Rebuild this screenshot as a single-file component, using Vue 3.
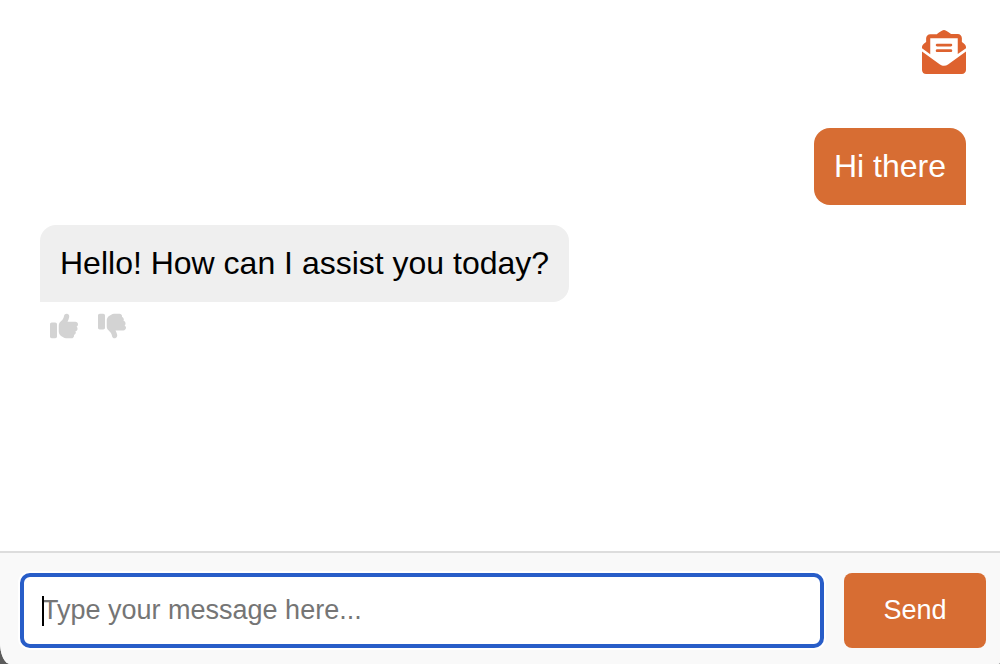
<script setup>
import { ref, computed } from 'vue'

const draft = ref('')
const caretShown = computed(() => draft.value === '')
const messages = ref([
  { id: 1, from: 'user', text: 'Hi there' },
  { id: 2, from: 'bot', text: 'Hello! How can I assist you today?' },
])

function send() {
  const text = draft.value.trim()
  if (!text) return
  messages.value.push({ id: messages.value.length + 1, from: 'user', text })
  draft.value = ''
}
</script>

<template>
  <main class="chat">
    <header class="top">
      <button class="icon-button mail" type="button" aria-label="Email transcript">
        <svg viewBox="0 0 512 512" aria-hidden="true">
          <path d="M256 417.1c-16.38 0-32.88-4.1-46.88-15.12L0 250.9v213.1C0 490.5 21.5 512 48 512h416c26.5 0 48-21.5 48-47.1V250.9l-209.1 151.1C288.9 412 272.4 417.1 256 417.1zM493.6 163C484.8 156 476.4 149.5 464 140.1v-44.12c0-26.5-21.5-48-48-48l-77.5 .0016c-3.125-2.25-5.875-4.25-9.125-6.5C312.6 29.13 279.3-.3732 256 .0018C232.8-.3732 199.4 29.13 182.6 41.5c-3.25 2.25-6 4.25-9.125 6.5L96 48c-26.5 0-48 21.5-48 48v44.12C35.63 149.5 27.25 156 18.38 163C6.75 172 0 186 0 200.8v10.62l96 69.37V96h320v184.7l96-69.37V200.8C512 186 505.3 172 493.6 163zM176 255.1h160c8.836 0 16-7.164 16-15.1c0-8.838-7.164-16-16-16h-160c-8.836 0-16 7.162-16 16C160 248.8 167.2 255.1 176 255.1zM176 191.1h160c8.836 0 16-7.164 16-16c0-8.838-7.164-15.1-16-15.1h-160c-8.836 0-16 7.162-16 15.1C160 184.8 167.2 191.1 176 191.1z" />
        </svg>
      </button>
    </header>

    <section class="messages" aria-label="Conversation">
      <div v-for="m in messages" :key="m.id" class="message" :class="m.from">
        <p class="bubble">{{ m.text }}</p>
        <div v-if="m.from === 'bot'" class="feedback">
          <button class="icon-button thumb" type="button" aria-label="Good answer">
            <svg viewBox="0 0 512 512" aria-hidden="true">
              <path d="M313.4 32.9c26 5.2 42.9 30.5 37.7 56.5l-2.3 11.4c-5.3 26.7-15.1 52.1-28.8 75.2H464c26.5 0 48 21.5 48 48c0 18.5-10.5 34.6-25.9 42.6C497 275.4 504 288.9 504 304c0 23.4-16.8 42.9-38.9 47.1c4.4 7.3 6.9 15.8 6.9 24.9c0 21.3-13.9 39.4-33.1 45.6c.7 3.3 1.1 6.8 1.1 10.4c0 26.5-21.5 48-48 48H294.5c-19 0-37.5-5.6-53.3-16.1l-38.5-25.7C176 420.4 160 390.4 160 358.3V320 272 247.1c0-29.2 13.3-56.7 36-75l7.4-5.9c26.5-21.2 44.6-51 51.2-84.2l2.3-11.4c5.2-26 30.5-42.9 56.5-37.7zM32 192H96c17.7 0 32 14.3 32 32V448c0 17.7-14.3 32-32 32H32c-17.7 0-32-14.3-32-32V224c0-17.7 14.3-32 32-32z" />
            </svg>
          </button>
          <button class="icon-button thumb" type="button" aria-label="Bad answer">
            <svg viewBox="0 0 512 512" aria-hidden="true">
              <path d="M313.4 479.1c26-5.2 42.9-30.5 37.7-56.5l-2.3-11.4c-5.3-26.7-15.1-52.1-28.8-75.2H464c26.5 0 48-21.5 48-48c0-18.5-10.5-34.6-25.9-42.6C497 236.6 504 223.1 504 208c0-23.4-16.8-42.9-38.9-47.1c4.4-7.3 6.9-15.8 6.9-24.9c0-21.3-13.9-39.4-33.1-45.6c.7-3.3 1.1-6.8 1.1-10.4c0-26.5-21.5-48-48-48H294.5c-19 0-37.5 5.6-53.3 16.1L202.7 73.8C176 91.6 160 121.6 160 153.7V192v48 24.9c0 29.2 13.3 56.7 36 75l7.4 5.9c26.5 21.2 44.6 51 51.2 84.2l2.3 11.4c5.2 26 30.5 42.9 56.5 37.7zM32 320H96c17.7 0 32-14.3 32-32V64c0-17.7-14.3-32-32-32H32C14.3 32 0 46.3 0 64V288c0 17.7 14.3 32 32 32z" />
            </svg>
          </button>
        </div>
      </div>
    </section>

    <form class="composer" @submit.prevent="send">
      <div class="field" :class="{ caret: caretShown }">
        <input v-model="draft" class="input" type="text" aria-label="Message" placeholder="Type your message here..." />
      </div>
      <button class="send" type="submit">Send</button>
    </form>
  </main>
</template>

<style>
html,
body {
  margin: 0;
  background: #5c5c5c;
}
</style>

<style scoped>
.chat {
  display: flex;
  flex-direction: column;
  min-height: 100vh;
  box-sizing: border-box;
  overflow: hidden;
  background: #fff;
  border-radius: 0 0 2px 10px / 0 0 2px 22px;
  font-family: "Liberation Sans", Arial, Helvetica, sans-serif;
}

.top {
  display: flex;
  justify-content: flex-end;
  padding: 30px 34px 0;
}

.icon-button {
  display: block;
  padding: 0;
  border: 0;
  background: none;
  cursor: pointer;
}

.icon-button svg {
  display: block;
  width: 100%;
  height: 100%;
  fill: currentColor;
}

.mail {
  width: 44px;
  height: 44px;
  color: #de622f;
}

.messages {
  flex: 1;
  display: flex;
  flex-direction: column;
  gap: 20px;
  padding: 54px 34px 20px 40px;
}

.message {
  display: flex;
  flex-direction: column;
  align-items: flex-start;
}

.message.user {
  align-items: flex-end;
}

.bubble {
  margin: 0;
  padding: 20px;
  border-radius: 16px 16px 16px 0;
  background: #efefef;
  color: #000;
  font-size: 32px;
  line-height: 37px;
}

.user .bubble {
  border-radius: 16px 16px 0 16px;
  background: #d76d33;
  color: #fff;
}

.feedback {
  display: flex;
  gap: 20px;
  padding: 10px 10px 0;
}

.thumb {
  width: 28px;
  height: 28px;
  color: #d3d3d3;
}

.composer {
  display: flex;
  gap: 20px;
  padding: 20px 14px 16px 20px;
  border-top: 2px solid #ddd;
  background: #f9f9f9;
}

.field {
  position: relative;
  flex: 1;
  display: flex;
}

.field.caret::before {
  content: "";
  position: absolute;
  left: 22px;
  top: 23px;
  width: 2px;
  height: 30px;
  background: #000;
}

.input {
  flex: 1;
  min-width: 0;
  box-sizing: border-box;
  height: 75px;
  padding: 0 18px;
  border: 4px solid #285dc8;
  border-radius: 10px;
  outline: 0;
  box-shadow: 0 0 0 2px #fff;
  background: #fff;
  color: #000;
  font-family: inherit;
  font-size: 27px;
}

.input::placeholder {
  color: #757575;
  opacity: 1;
}

.send {
  min-width: 142px;
  padding: 0 20px;
  border: 0;
  border-radius: 8px;
  background: #d76d33;
  color: #fff;
  font-family: inherit;
  font-size: 27px;
  cursor: pointer;
}
</style>
